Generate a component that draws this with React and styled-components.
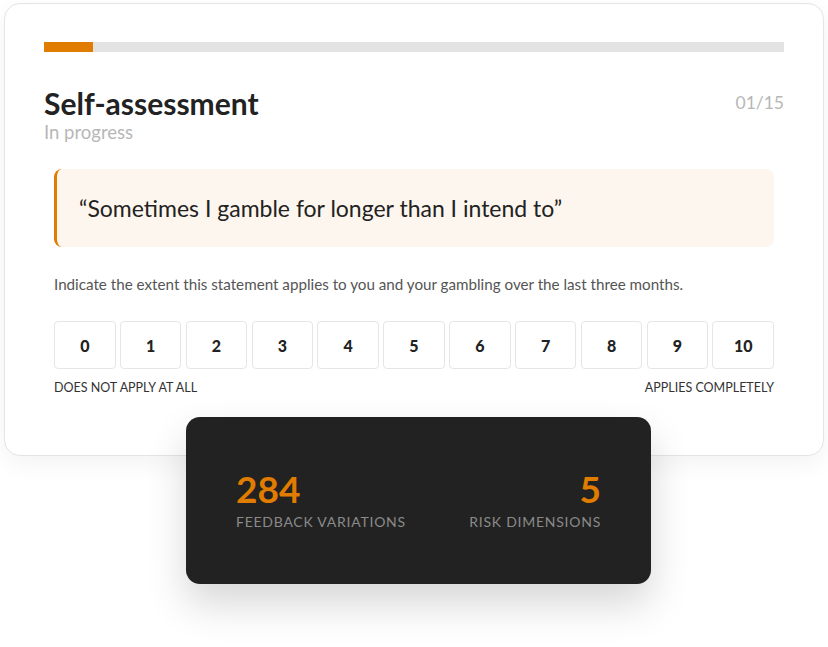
import React from "react";
import styled, { createGlobalStyle } from "styled-components";

const Global = createGlobalStyle`
  html, body { margin: 0; padding: 0; background: #ffffff; }
  body { font-family: Lato, "Noto Sans", sans-serif; color: #222; }
  * { box-sizing: border-box; }
`;

const Page = styled.div`
  width: 828px;
  height: 647px;
  padding: 3px 4px 0;
  overflow: hidden;
`;

const Card = styled.div`
  background: #fff;
  border: 1px solid #e4e4e4;
  border-radius: 16px;
  box-shadow: 0 8px 24px rgba(0, 0, 0, 0.05);
  padding: 38px 39px 0;
  height: 453px;
`;

const Track = styled.div`
  height: 10px;
  background: #e3e3e3;
`;

const Fill = styled.div`
  height: 100%;
  background: #e07c00;
`;

const Header = styled.div`
  display: flex;
  justify-content: space-between;
  align-items: flex-start;
  margin-top: 35px;
`;

const Title = styled.h1`
  margin: 0;
  font-size: 30px;
  line-height: 33px;
  font-weight: 700;
  color: #222;
`;

const Status = styled.div`
  font-size: 18.5px;
  line-height: 24px;
  color: #b7b7b7;
`;

const Counter = styled.div`
  font-size: 17.5px;
  line-height: 24px;
  color: #b7b7b7;
  margin-top: 4px;
`;

const Body = styled.div`
  padding: 0 10px;
  margin-top: 25px;
`;

const Quote = styled.blockquote`
  margin: 0;
  height: 78px;
  display: flex;
  align-items: center;
  padding: 0 22px;
  background: #fdf6ef;
  border-left: 3px solid #e07c00;
  border-radius: 8px;
  font-size: 23px;
  color: #222;
`;

const Instruction = styled.p`
  margin: 28px 0 0;
  font-size: 15.2px;
  line-height: 18px;
  color: #555;
`;

const Scale = styled.div`
  display: grid;
  grid-template-columns: repeat(11, 1fr);
  gap: 4.3px;
  margin-top: 28px;
`;

const ScaleButton = styled.button`
  height: 48px;
  border: 1px solid #e6e6e6;
  border-radius: 4px;
  background: #fff;
  font-family: Lato, "Noto Sans", sans-serif;
  font-weight: 900;
  font-size: 16px;
  color: #222;
  padding: 0;
`;

const Ends = styled.div`
  display: flex;
  justify-content: space-between;
  margin-top: 12px;
  font-size: 12.5px;
  line-height: 14px;
  color: #333;
  text-transform: uppercase;
`;

const StatsCard = styled.div`
  position: relative;
  width: 465px;
  height: 167px;
  margin: -39px 0 0 182px;
  background: #222;
  border-radius: 14px;
  box-shadow: 0 20px 40px rgba(0, 0, 0, 0.16);
  display: flex;
  justify-content: space-between;
  align-items: center;
  padding: 0 50px;
`;

const Stat = styled.div`
  display: flex;
  flex-direction: column;
  align-items: ${(p) => (p.$right ? "flex-end" : "flex-start")};
`;

const StatValue = styled.div`
  font-size: 37px;
  line-height: 36px;
  font-weight: 700;
  color: #e07c00;
`;

const StatLabel = styled.div`
  margin-top: 7px;
  font-size: 14px;
  line-height: 16px;
  letter-spacing: 0.75px;
  color: #8a8a8a;
  text-transform: uppercase;
`;

export default function App() {
  const current = 1;
  const total = 15;
  return (
    <Page>
      <Global />
      <Card>
        <Track>
          <Fill style={{ width: `${(current / total) * 100}%` }} />
        </Track>
        <Header>
          <div>
            <Title>Self-assessment</Title>
            <Status>In progress</Status>
          </div>
          <Counter>01/15</Counter>
        </Header>
        <Body>
          <Quote>“Sometimes I gamble for longer than I intend to”</Quote>
          <Instruction>
            Indicate the extent this statement applies to you and your gambling over the last three months.
          </Instruction>
          <Scale>
            {Array.from({ length: 11 }, (_, i) => (
              <ScaleButton key={i}>{i}</ScaleButton>
            ))}
          </Scale>
          <Ends>
            <span>Does not apply at all</span>
            <span>Applies completely</span>
          </Ends>
        </Body>
      </Card>
      <StatsCard>
        <Stat>
          <StatValue>284</StatValue>
          <StatLabel>Feedback variations</StatLabel>
        </Stat>
        <Stat $right>
          <StatValue>5</StatValue>
          <StatLabel>Risk dimensions</StatLabel>
        </Stat>
      </StatsCard>
    </Page>
  );
}
